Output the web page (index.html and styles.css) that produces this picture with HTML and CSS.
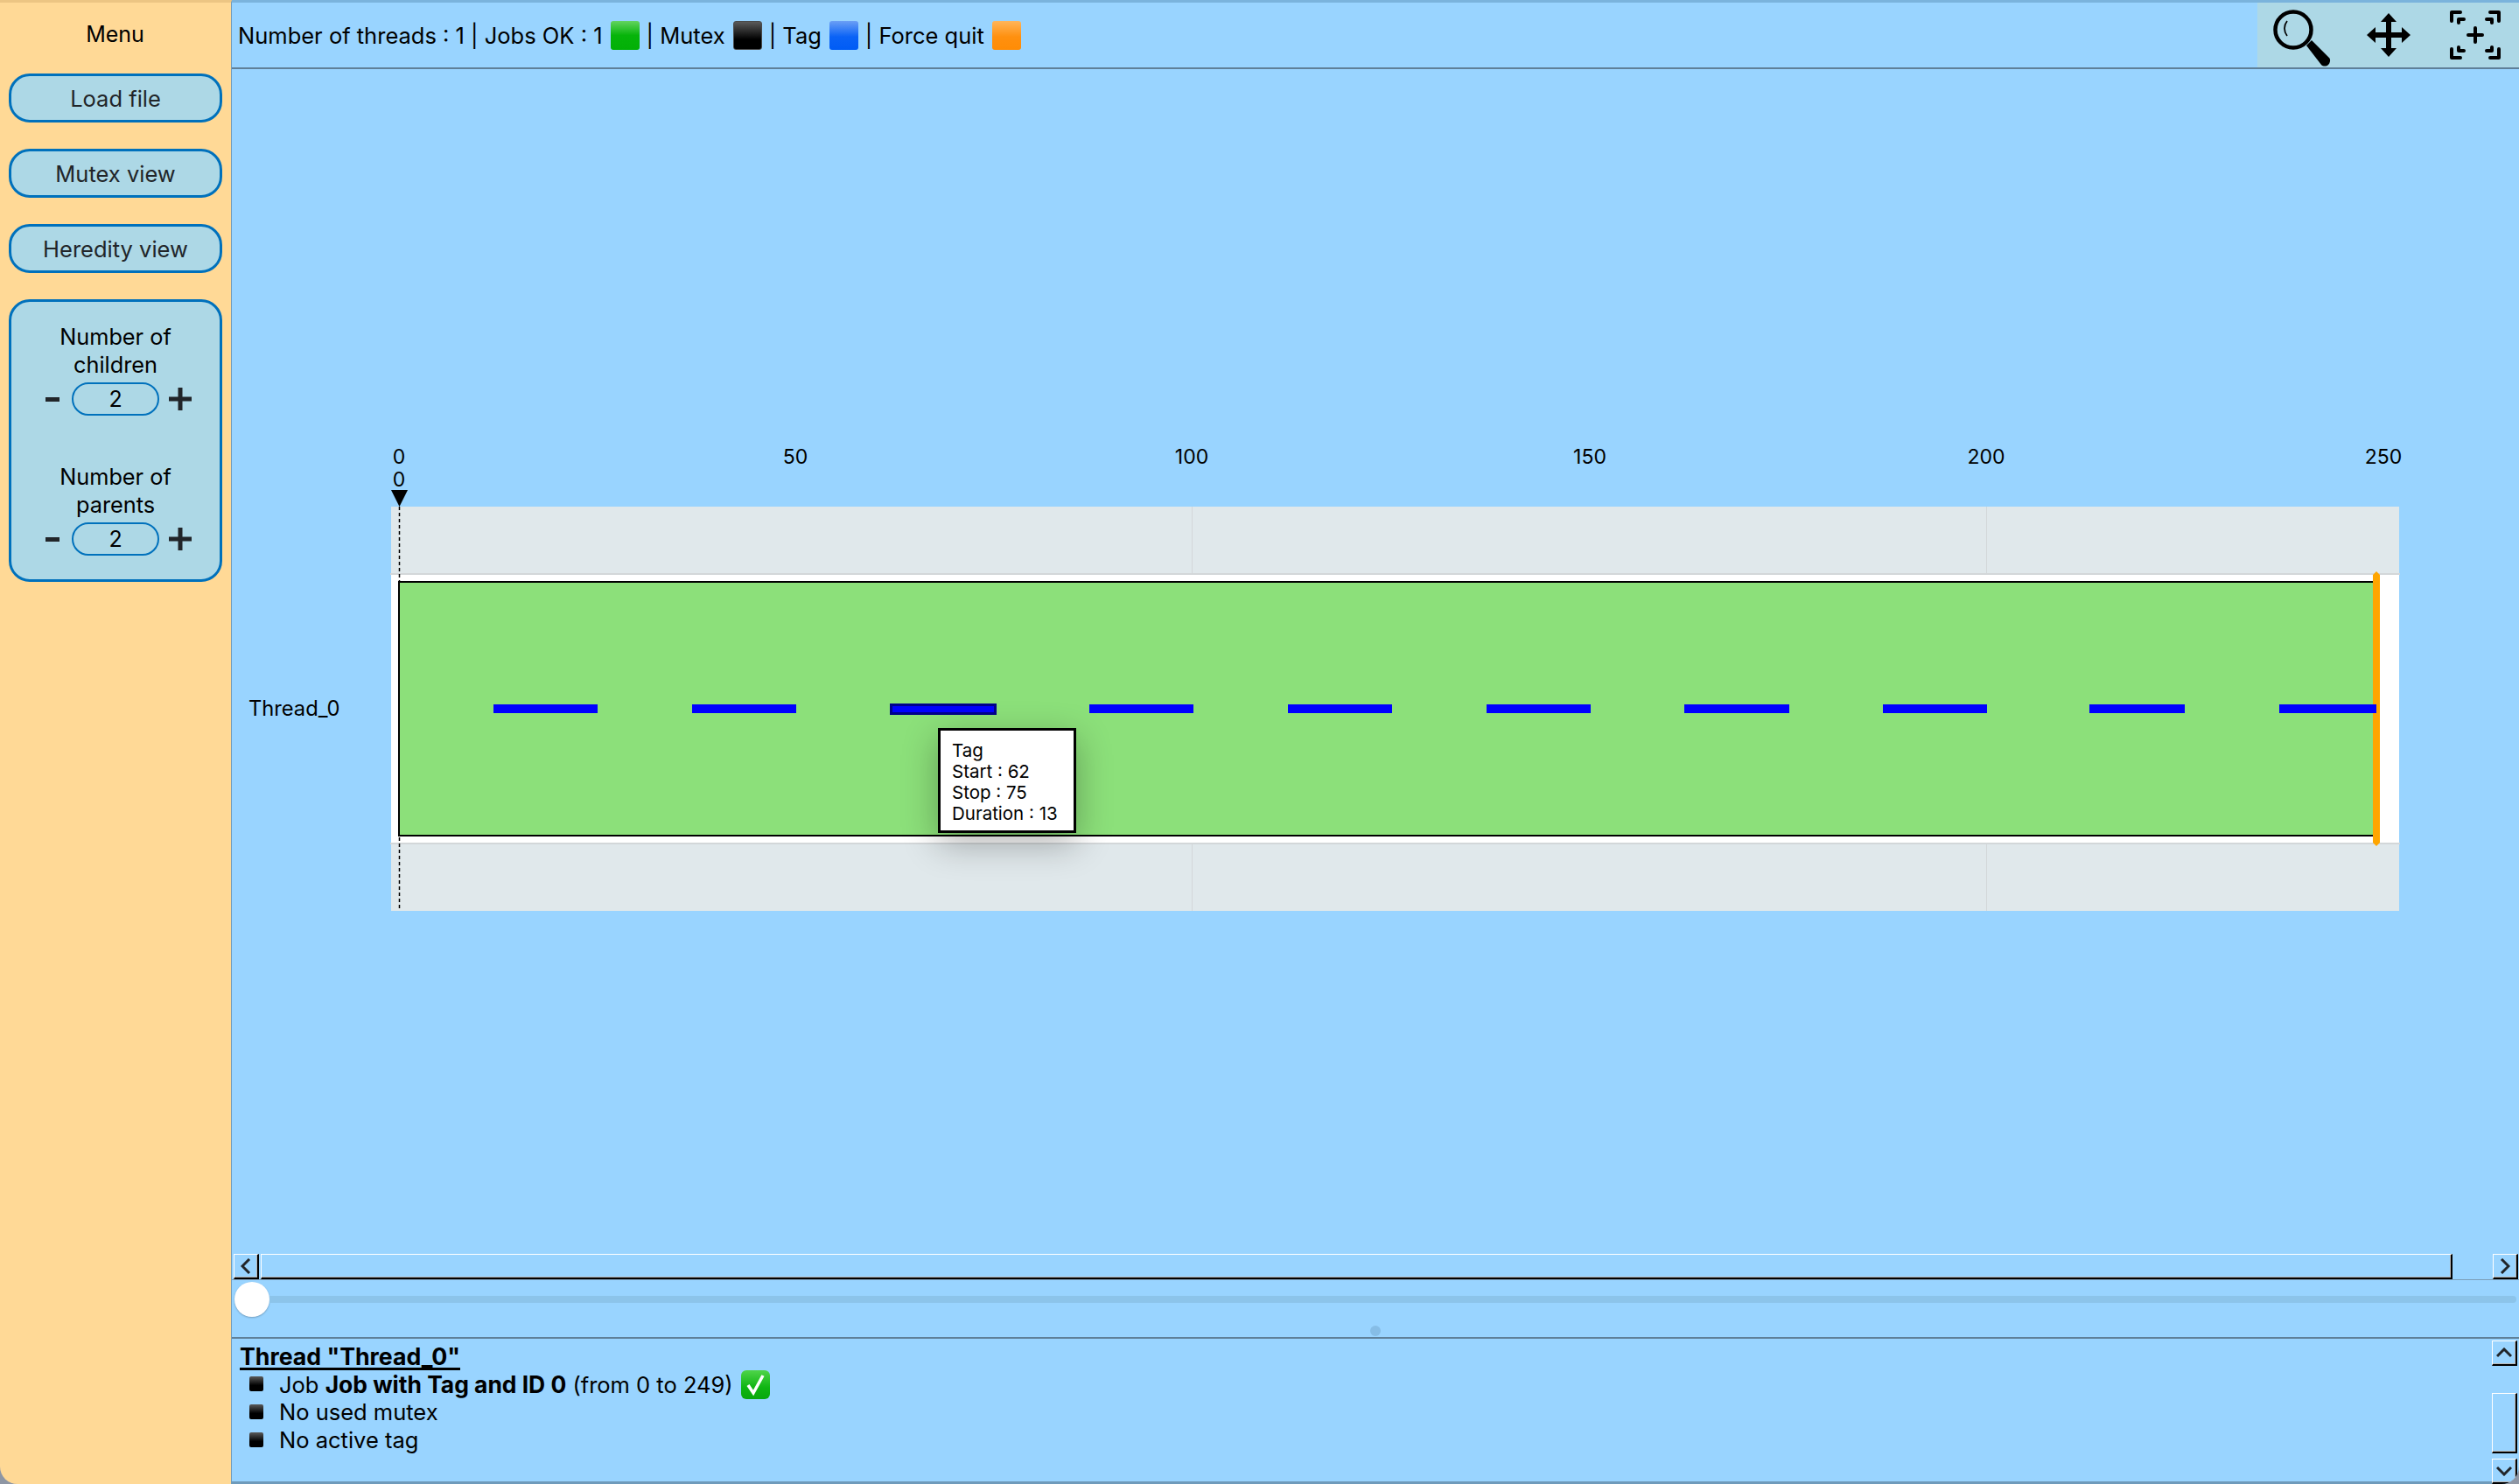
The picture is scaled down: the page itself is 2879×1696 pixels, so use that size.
FILE: index.html
```html
<!DOCTYPE html>
<html lang="en">
<head>
<meta charset="utf-8">
<title>Thread viewer</title>
<link rel="stylesheet" href="styles.css">
</head>
<body>
<div class="window">
  <aside class="sidebar">
    <div class="menu-title">Menu</div>
    <button class="side-btn">Load file</button>
    <button class="side-btn">Mutex view</button>
    <button class="side-btn">Heredity view</button>
    <div class="number-box">
      <div class="number-group">
        <div class="number-label">Number of<br>children</div>
        <div class="stepper">
          <svg class="minus" width="16" height="5" viewBox="0 0 16 5"><rect width="16" height="5"/></svg>
          <div class="number-value">2</div>
          <svg class="plus" width="26" height="26" viewBox="0 0 26 26"><path d="M10.500 0h5v10.500H26v5H15.500V26h-5V15.500H0v-5h10.500z"/></svg>
        </div>
      </div>
      <div class="number-group">
        <div class="number-label">Number of<br>parents</div>
        <div class="stepper">
          <svg class="minus" width="16" height="5" viewBox="0 0 16 5"><rect width="16" height="5"/></svg>
          <div class="number-value">2</div>
          <svg class="plus" width="26" height="26" viewBox="0 0 26 26"><path d="M10.500 0h5v10.500H26v5H15.500V26h-5V15.500H0v-5h10.500z"/></svg>
        </div>
      </div>
    </div>
  </aside>
  <main class="main">
    <header class="header">
      <div class="legend">
        <span>Number of threads : 1 | Jobs OK : 1</span><i class="swatch swatch-green"></i>
        <span>| Mutex</span><i class="swatch swatch-black"></i>
        <span>| Tag</span><i class="swatch swatch-blue"></i>
        <span>| Force quit</span><i class="swatch swatch-orange"></i>
      </div>
      <div class="toolbar">
        <svg class="tool-zoom" width="66" height="66" viewBox="0 0 66 66">
          <circle cx="23" cy="24" r="20.500" fill="none" stroke="#000" stroke-width="4.500"/>
          <path d="M16 14c-4 5-4 12 0 17" fill="none" stroke="#000" stroke-width="1.800"/>
          <path d="M38 42l6-6 20 20c2 2 1 6-1 8s-6 2-8 0z"/>
        </svg>
        <svg class="tool-move" width="50" height="50" viewBox="0 0 50 50">
          <path d="M25 0l9 10h-6v12h12v-6l10 9-10 9v-6H28v12h6l-9 10-9-10h6V28H10v6L0 25l10-9v6h12V10h-6z"/>
        </svg>
        <svg class="tool-fit" width="58" height="58" viewBox="0 0 58 58" fill="none" stroke="#000" stroke-width="4" stroke-linecap="round" stroke-linejoin="round">
          <path d="M2 13V3h10M10 15v-4h6M56 13V3H46M48 15v-4h-6M2 45v10h10M10 43v4h6M56 45v10H46M48 43v4h-6"/>
          <path d="M29 21v16M21 29h16"/>
        </svg>
      </div>
    </header>
    <section class="chart-area">
      <svg class="chart" width="2614" height="1354" viewBox="265 79 2614 1354">
        <rect class="band" x="447" y="579" width="2295" height="77"/>
        <rect class="gap" x="447" y="656" width="2295" height="307"/>
        <rect class="band" x="447" y="963" width="2295" height="78"/>
        <rect class="grid" x="1362" y="579" width="1" height="77"/>
        <rect class="grid" x="2270" y="579" width="1" height="77"/>
        <rect class="grid" x="1362" y="963" width="1" height="78"/>
        <rect class="grid" x="2270" y="963" width="1" height="78"/>
        <rect class="rule" x="446" y="655" width="2297" height="2"/>
        <rect class="rule" x="446" y="963" width="2297" height="2"/>

        <text class="tick" x="456" y="530">0</text>
        <text class="tick" x="909" y="530">50</text>
        <text class="tick" x="1362" y="530">100</text>
        <text class="tick" x="1817" y="530">150</text>
        <text class="tick" x="2270" y="530">200</text>
        <text class="tick" x="2724" y="530">250</text>
        <text class="tick" x="456" y="556">0</text>
        <path d="M447 560h19l-9.500 19z"/>
        <path class="dash" d="M456.500 579V1041"/>

        <rect class="job" x="456" y="665" width="2260" height="290"/>

        <rect class="tag" x="564" y="805" width="119" height="10"/>
        <rect class="tag" x="791" y="805" width="119" height="10"/>
        <rect class="tag tag-active" x="1018.500" y="805.500" width="119" height="10"/>
        <rect class="tag" x="1245" y="805" width="119" height="10"/>
        <rect class="tag" x="1472" y="805" width="119" height="10"/>
        <rect class="tag" x="1699" y="805" width="119" height="10"/>
        <rect class="tag" x="1925" y="805" width="120" height="10"/>
        <rect class="tag" x="2152" y="805" width="119" height="10"/>
        <rect class="tag" x="2388" y="805" width="109" height="10"/>
        <polygon class="quit" points="2716,653 2720,657 2720,963 2716,967 2712,963 2712,657"/>
        <rect class="tag" x="2605" y="805" width="111" height="10"/>

        <text class="thread-name" x="284" y="818">Thread_0</text>
      </svg>
      <div class="tooltip">Tag<br>Start : 62<br>Stop : 75<br>Duration : 13</div>
    </section>
    <div class="hscroll">
      <div class="sb-btn sb-arrow">
        <svg width="12" height="18" viewBox="0 0 12 18"><path d="M10 1L2 9l8 8"/></svg>
      </div>
      <div class="sb-thumb-h"></div>
      <div class="sb-btn sb-arrow">
        <svg width="12" height="18" viewBox="0 0 12 18"><path d="M2 1l8 8-8 8"/></svg>
      </div>
    </div>
    <div class="slider">
      <div class="slider-thumb"></div>
      <div class="slider-track"></div>
      <div class="split-dot"></div>
    </div>
    <section class="info">
      <div class="info-text">
        <div class="info-title">Thread "Thread_0"</div>
        <ul class="info-list">
          <li>Job <b>Job with Tag and ID 0</b> (from 0 to 249)
            <svg class="check" width="33" height="33" viewBox="0 0 33 33">
              <defs><linearGradient id="checkFill" x1="0" y1="0" x2="0" y2="1"><stop offset="0" stop-color="#4fd44a"/><stop offset=".6" stop-color="#0fb512"/><stop offset="1" stop-color="#08a80c"/></linearGradient></defs>
              <rect width="33" height="33" rx="6" fill="url(#checkFill)"/>
              <path d="M8 17l6 9 11-20" fill="none" stroke="#fff" stroke-width="3.500"/>
            </svg>
          </li>
          <li>No used mutex</li>
          <li>No active tag</li>
        </ul>
      </div>
      <div class="vscroll">
        <div class="sb-btn sb-arrow sb-v">
          <svg width="18" height="12" viewBox="0 0 18 12"><path d="M1 10l8-8 8 8"/></svg>
        </div>
        <div class="sb-thumb-v"></div>
        <div class="sb-btn sb-arrow sb-v">
          <svg width="18" height="12" viewBox="0 0 18 12"><path d="M1 2l8 8 8-8"/></svg>
        </div>
      </div>
    </section>
  </main>
</div>
</body>
</html>
```

FILE: styles.css
```css
* { box-sizing: border-box; }
html, body { margin: 0; padding: 0; }
body {
  width: 2879px;
  height: 1696px;
  overflow: hidden;
  background: #8e96a4;
  font-family: Inter, "Liberation Sans", sans-serif;
  color: #000;
}
.window {
  display: flex;
  width: 2879px;
  height: 1696px;
  border-radius: 0 0 20px 20px;
  overflow: hidden;
}

/* Sidebar */
.sidebar {
  flex: none;
  width: 265px;
  padding: 0 11px 0 10px;
  background: #ffd996;
  border-top: 3px solid #ecc583;
  border-right: 1px solid #6f9bbb;
}
.menu-title {
  height: 81px;
  padding-top: 20px;
  line-height: 32px;
  text-align: center;
  font-size: 25px;
}
.side-btn {
  display: block;
  width: 244px;
  height: 56px;
  margin: 0 0 30px;
  padding: 1px 0 0;
  background: #add8e6;
  border: 3px solid #0071bc;
  border-radius: 24px;
  font: inherit;
  font-size: 25.500px;
  color: #212529;
}
.number-box {
  width: 244px;
  height: 323px;
  margin-top: 1px;
  padding: 24px 0 0;
  background: #add8e6;
  border: 3px solid #0071bc;
  border-radius: 24px;
  display: flex;
  flex-direction: column;
  gap: 54px;
}
.number-label {
  font-size: 25.300px;
  line-height: 32px;
  text-align: center;
}
.stepper {
  display: flex;
  align-items: center;
  margin-top: 4px;
  padding-left: 39px;
  height: 38px;
}
.minus, .plus { flex: none; fill: #212529; }
.number-value {
  flex: none;
  width: 100px;
  height: 38px;
  margin: 0 11px 0 14px;
  border: 2px solid #0071bc;
  border-radius: 19px;
  text-align: center;
  font-size: 25px;
  line-height: 34px;
}

/* Main column */
.main {
  flex: 1;
  min-width: 0;
  display: flex;
  flex-direction: column;
  background: #99d4ff;
  border-top: 3px solid #7ab3dc;
  border-bottom: 3px solid #6f9bbb;
}
.header {
  flex: none;
  height: 76px;
  display: flex;
  justify-content: space-between;
  border-bottom: 2px solid #5f8099;
}
.legend {
  display: flex;
  align-items: center;
  padding-left: 7px;
  font-size: 25.500px;
}
.swatch {
  flex: none;
  width: 33px;
  height: 33px;
  margin: 0 8px 0 9px;
  border-radius: 3px;
}
.swatch-green { background: linear-gradient(#63d35f 0, #06b40a 50%, #02b006 100%); }
.swatch-black { background: linear-gradient(#5a5a5a 0, #000 65%); border: 1px solid #4a4a4a; }
.swatch-blue { background: linear-gradient(#6b9ff5 0, #0a62f6 55%, #005cf5 100%); }
.swatch-orange { background: linear-gradient(#ffb55a 0, #ff900f 55%, #ff8c05 100%); }
.toolbar {
  flex: none;
  width: 299px;
  height: 74px;
  background: #add8e6;
  display: flex;
  align-items: center;
  padding-left: 18px;
}
.tool-zoom { flex: none; margin-top: 6px; }
.tool-move { flex: none; margin-left: 41px; }
.tool-fit { flex: none; margin-left: 45px; margin-top: -1px; }

/* Chart */
.chart-area {
  position: relative;
  flex: none;
  height: 1354px;
}
.chart { display: block; }
.chart text {
  font-family: Inter, "Liberation Sans", sans-serif;
}
.band { fill: #e0e8eb; }
.gap { fill: #fff; }
.grid { fill: #d3d7d9; }
.rule { fill: #d3d7d9; }
.tick { font-size: 23px; text-anchor: middle; }
.chart .thread-name { font-size: 23.700px; }
.dash { stroke: #000; stroke-width: 1.500; stroke-dasharray: 4 3; fill: none; }
.job { fill: #8ce07a; stroke: #000; stroke-width: 2; }
.tag { fill: #0000ff; }
.tag-active { stroke: #00008b; stroke-width: 3; }
.quit { fill: #ffa500; }
.tooltip {
  position: absolute;
  left: 807px;
  top: 753px;
  width: 158px;
  height: 120px;
  padding: 11px 0 0 13px;
  background: #fff;
  border: 3px solid #000;
  font-size: 20.500px;
  line-height: 24px;
  box-shadow: 0 12px 40px rgba(0, 0, 0, .3);
}

/* Scrollbars */
.hscroll {
  flex: none;
  height: 30px;
  display: flex;
  padding-left: 2px;
  padding-right: 1px;
  border-bottom: 1px solid #7a9db8;
  justify-content: space-between;
}
.sb-btn, .sb-thumb-h, .sb-thumb-v {
  border-top: 1px solid #fff;
  border-left: 1px solid #fff;
  border-right: 2px solid #000;
  border-bottom: 2px solid #000;
  box-shadow: inset -1px -1px 0 #b9b9b9;
}
.sb-btn {
  flex: none;
  width: 29px;
  height: 29px;
  display: flex;
  align-items: center;
  justify-content: center;
}
.sb-arrow svg {
  fill: none;
  stroke: #212529;
  stroke-width: 3;
}
.sb-thumb-h {
  flex: none;
  width: 2505px;
  margin-left: 1px;
  margin-right: 46px;
}

/* Slider */
.slider {
  position: relative;
  flex: none;
  height: 65px;
  display: flex;
  align-items: center;
  padding: 2px 3px 23px 3px;
}
.slider-thumb {
  flex: none;
  width: 40px;
  height: 40px;
  border-radius: 50%;
  background: #fff;
  box-shadow: 0 1px 2px rgba(0, 0, 0, .25);
}
.slider-track {
  flex: 1;
  height: 8px;
  background: #8cc4ea;
  border-radius: 0 4px 4px 0;
}
.split-dot {
  position: absolute;
  left: 1301px;
  bottom: 1px;
  width: 12px;
  height: 12px;
  border-radius: 50%;
  background: #86bde6;
}

/* Info panel */
.info {
  flex: 1;
  min-height: 0;
  display: flex;
  justify-content: space-between;
  border-top: 2px solid #5f8099;
}
.info-text {
  padding: 4px 0 0 9px;
  font-size: 25.500px;
}
.info-title {
  font-size: 26.700px;
  font-weight: 700;
  line-height: 32px;
  text-decoration: underline;
  text-decoration-thickness: 3px;
  text-underline-offset: 3px;
}
.info-list {
  list-style: none;
  margin: 0;
  padding: 0 0 0 45px;
}
.info-list b { font-size: 26.400px; }
.info-list li {
  position: relative;
  height: 32px;
  line-height: 32px;
  white-space: nowrap;
}
.info-list li::before {
  content: "";
  position: absolute;
  left: -34px;
  top: 7px;
  width: 16px;
  height: 17px;
  border-radius: 2px;
  background: linear-gradient(#5a5a5a 0, #000 60%);
}
.check {
  vertical-align: -7px;
  margin-left: 2px;
}
.vscroll {
  flex: none;
  width: 31px;
  display: flex;
  flex-direction: column;
  padding-top: 2px;
}
.sb-v { height: 29px; }
.sb-thumb-v {
  flex: none;
  width: 29px;
  height: 69px;
  margin: 31px 0 6px;
}
```
